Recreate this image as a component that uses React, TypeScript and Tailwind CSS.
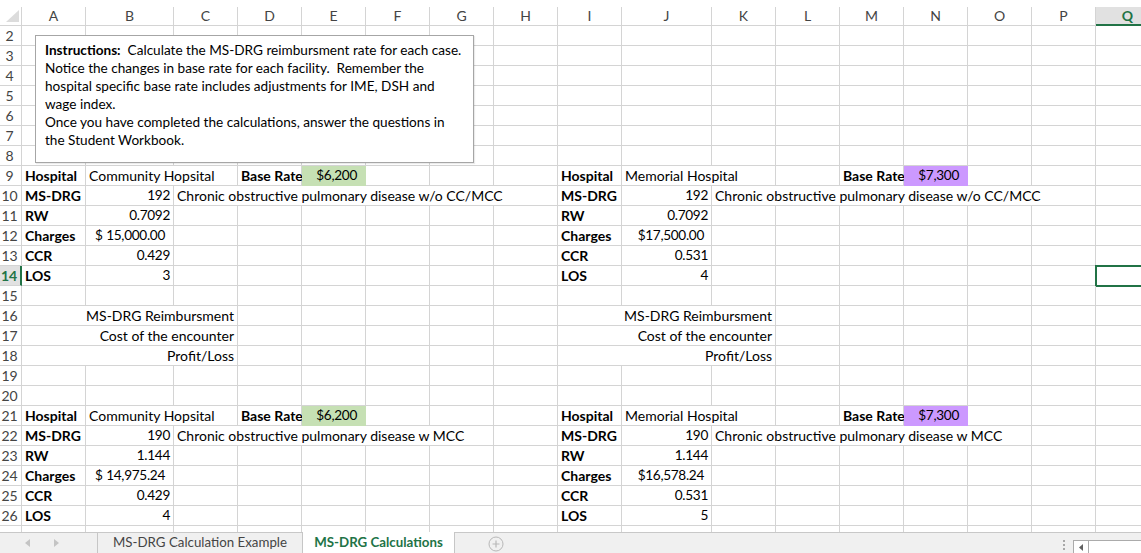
import React from "react";

type Cell = {
  c: number; // 1 = column A
  span?: number;
  t?: string;
  b?: boolean;
  right?: boolean;
  num?: boolean;
  acct?: [string, string];
  fill?: "green" | "purple";
  pr?: string;
};

const LETTERS = ["A", "B", "C", "D", "E", "F", "G", "H", "I", "J", "K", "L", "M", "N", "O", "P", "Q"];

const spanClass: Record<number, string> = {
  1: "col-span-1",
  2: "col-span-2",
  3: "col-span-3",
  4: "col-span-4",
  5: "col-span-5",
  6: "col-span-6",
};

const GRID =
  "grid grid-cols-[22px_64px_88px_64px_64px_64px_64px_64px_64px_64px_90px_64px_64px_64px_64px_64px_64px_64px]";

// one hospital case block, rows start..start+5, starting at column `c0`
function caseBlock(
  c0: number,
  hosp: string,
  drg: string,
  desc: string,
  descSpan: number,
  rw: string,
  charges: Cell,
  ccr: string,
  los: string,
  baseCol: number,
  base: string,
  fill: "green" | "purple"
): Cell[][] {
  return [
    [
      { c: c0, t: "Hospital", b: true },
      { c: c0 + 1, span: 2, t: hosp },
      { c: baseCol, t: "Base Rate", b: true },
      { c: baseCol + 1, t: base, right: true, num: true, fill, pr: "pr-[8px]" },
    ],
    [
      { c: c0, t: "MS-DRG", b: true },
      { c: c0 + 1, t: drg, right: true, num: true },
      { c: c0 + 2, span: descSpan, t: desc },
    ],
    [
      { c: c0, t: "RW", b: true },
      { c: c0 + 1, t: rw, right: true, num: true },
    ],
    [
      { c: c0, t: "Charges", b: true },
      { ...charges, c: c0 + 1, num: true },
    ],
    [
      { c: c0, t: "CCR", b: true },
      { c: c0 + 1, t: ccr, right: true, num: true },
    ],
    [
      { c: c0, t: "LOS", b: true },
      { c: c0 + 1, t: los, right: true, num: true },
    ],
  ];
}

function buildRows(): Record<number, Cell[]> {
  const rows: Record<number, Cell[]> = {};
  const add = (r: number, cells: Cell[]) => {
    rows[r] = [...(rows[r] || []), ...cells];
  };
  const put = (start: number, block: Cell[][]) => block.forEach((cells, i) => add(start + i, cells));

  put(9, caseBlock(1, "Community Hopsital", "192", "Chronic obstructive pulmonary disease w/o CC/MCC", 6,
    "0.7092", { c: 0, acct: ["$", "15,000.00"] }, "0.429", "3", 4, "$6,200", "green"));
  put(9, caseBlock(9, "Memorial Hospital", "192", "Chronic obstructive pulmonary disease w/o CC/MCC", 6,
    "0.7092", { c: 0, t: "$17,500.00", right: true, pr: "pr-[7px]" }, "0.531", "4", 13, "$7,300", "purple"));
  put(21, caseBlock(1, "Community Hopsital", "190", "Chronic obstructive pulmonary disease w MCC", 5,
    "1.144", { c: 0, acct: ["$", "14,975.24"] }, "0.429", "4", 4, "$6,200", "green"));
  put(21, caseBlock(9, "Memorial Hospital", "190", "Chronic obstructive pulmonary disease w MCC", 5,
    "1.144", { c: 0, t: "$16,578.24", right: true, pr: "pr-[7px]" }, "0.531", "5", 13, "$7,300", "purple"));

  ["MS-DRG Reimbursment", "Cost of the encounter", "Profit/Loss"].forEach((t, i) => {
    add(16 + i, [
      { c: 1, span: 3, t, right: true },
      { c: 9, span: 3, t, right: true },
    ]);
  });

  return rows;
}

const ROWS = buildRows();

function SheetRow({ n, short }: { n: number; short?: boolean }) {
  const specs = ROWS[n] || [];
  const out: React.ReactNode[] = [];
  const selected = n === 14;

  out.push(
    <div
      key="h"
      className={`flex items-center justify-center pr-[2px] pt-px ${short ? "" : "border-b"} border-[#d4d4d4] ${
        selected
          ? "bg-[#e1e1e1] font-bold text-[#217346] border-r-2 border-r-[#217346]"
          : "border-r text-[#444]"
      }`}
    >
      {short ? "" : n}
    </div>
  );

  let col = 1;
  while (col <= 17) {
    const spec = specs.find((s) => s.c === col);
    const span = spec?.span ?? 1;
    const fillCls =
      spec?.fill === "green"
        ? "bg-[#c6e0b4] border-[#c6e0b4]"
        : spec?.fill === "purple"
        ? "bg-[#cc99ff] border-[#cc99ff]"
        : "border-[#d4d4d4]";
    const isActive = n === 14 && col === 17;
    out.push(
      <div
        key={col}
        className={`${spanClass[span]} relative flex items-center whitespace-nowrap border-r ${
          short ? "" : "border-b"
        } ${fillCls} ${spec?.right ? "justify-end" : "justify-start"} ${
          spec?.pr ?? "pr-[3px]"
        } pl-[3px] pt-px ${spec?.b ? "font-bold" : ""} ${spec?.num ? "text-[13.6px] tracking-[-0.3px]" : ""}`}
      >
        {spec?.acct ? (
          <div className="flex w-full justify-between pl-[6px] pr-[5px]">
            <span>{spec.acct[0]}</span>
            <span>{spec.acct[1]}</span>
          </div>
        ) : (
          spec?.t
        )}
        {isActive && (
          <div className="absolute -left-px -top-px h-[22px] w-[66px] border-2 border-[#217346]" />
        )}
      </div>
    );
    col += span;
  }

  return <div className={`${GRID} ${short ? "h-[6px] overflow-hidden" : "h-5"}`}>{out}</div>;
}

function HeaderRow() {
  return (
    <div className={`${GRID} h-[19px]`}>
      <div className="relative border-r border-b border-[#d4d4d4]">
        <svg className="absolute bottom-[3px] right-[2px]" width="13" height="12" viewBox="0 0 13 12">
          <polygon points="13,0 13,12 0,12" fill="#dcdcdc" />
        </svg>
      </div>
      {LETTERS.map((l) =>
        l === "Q" ? (
          <div
            key={l}
            className="flex items-center justify-center border-b-2 border-r border-b-[#217346] border-r-[#d4d4d4] bg-[#e1e1e1] pt-px font-bold text-[#217346]"
          >
            {l}
          </div>
        ) : (
          <div key={l} className="flex items-center justify-center border-r border-b border-[#d4d4d4] text-[#444]">
            {l}
          </div>
        )
      )}
    </div>
  );
}

function TabBar() {
  return (
    <div className="relative flex h-[21px] items-stretch border-t border-[#c8c8c8] bg-[#f0f0f0] text-[13.3px]">
      <div className="flex w-[97px] items-center gap-[24px] pl-[25px]">
        <svg width="5" height="8" viewBox="0 0 5 8">
          <polygon points="5,0 5,8 0,4" fill="#c4c4c4" />
        </svg>
        <svg width="5" height="8" viewBox="0 0 5 8">
          <polygon points="0,0 0,8 5,4" fill="#c4c4c4" />
        </svg>
      </div>
      <div className="flex w-[205px] items-center justify-center border-l border-[#c6c6c6] text-[#444]">
        MS-DRG Calculation Example
      </div>
      <div className="-mt-px flex w-[153px] items-center justify-center border-x border-[#c6c6c6] bg-white font-bold text-[#217346]">
        MS-DRG Calculations
      </div>
      <div className="flex w-[80px] items-center justify-center pl-[2px] pt-px">
        <svg width="16" height="16" viewBox="0 0 16 16">
          <circle cx="8" cy="8" r="7" fill="none" stroke="#b8b8b8" strokeWidth="1" />
          <path d="M8 4.5v7M4.5 8h7" stroke="#b8b8b8" strokeWidth="1.2" />
        </svg>
      </div>
      <div className="flex-1" />
      <div className="flex w-[16px] flex-col items-center justify-center gap-[2px] pt-[3px]">
        <span className="h-[2px] w-[2px] bg-[#a8a8a8]" />
        <span className="h-[2px] w-[2px] bg-[#a8a8a8]" />
        <span className="h-[2px] w-[2px] bg-[#a8a8a8]" />
      </div>
      <div className="ml-px mt-[7px] flex w-[68px] border-l border-t border-[#ababab] bg-white">
        <div className="flex w-[15px] items-center justify-center border-r border-[#ababab]">
          <svg width="4" height="7" viewBox="0 0 4 7">
            <polygon points="4,0 4,7 0,3.5" fill="#606060" />
          </svg>
        </div>
      </div>
    </div>
  );
}

export default function App() {
  const rowNums = Array.from({ length: 25 }, (_, i) => i + 2);
  return (
    <div className="h-[553px] w-[1141px] overflow-hidden bg-white font-['Lato',sans-serif] text-[14px] leading-none text-black">
      <div className="h-[7px]" />
      <div className="relative">
        <HeaderRow />
        {rowNums.map((n) => (
          <SheetRow key={n} n={n} />
        ))}
        <SheetRow n={27} short />

        {/* Instructions text box */}
        <div className="absolute left-[35px] top-[28px] h-[128px] w-[439px] border border-[#a6a6a6] bg-white px-[9px] pt-[5px] text-[13.6px] leading-[18px] shadow-[1px_1px_1px_rgba(0,0,0,0.08)]">
          <div className="whitespace-nowrap">
            <span className="font-bold">Instructions:</span>&nbsp; Calculate the MS-DRG reimbursment rate for each case.
          </div>
          <div className="whitespace-nowrap">Notice the changes in base rate for each facility.&nbsp; Remember the</div>
          <div className="whitespace-nowrap">hospital specific base rate includes adjustments for IME, DSH and</div>
          <div className="whitespace-nowrap">wage index.</div>
          <div className="whitespace-nowrap">Once you have completed the calculations, answer the questions in</div>
          <div className="whitespace-nowrap">the Student Workbook.</div>
        </div>
      </div>
      <TabBar />
    </div>
  );
}
